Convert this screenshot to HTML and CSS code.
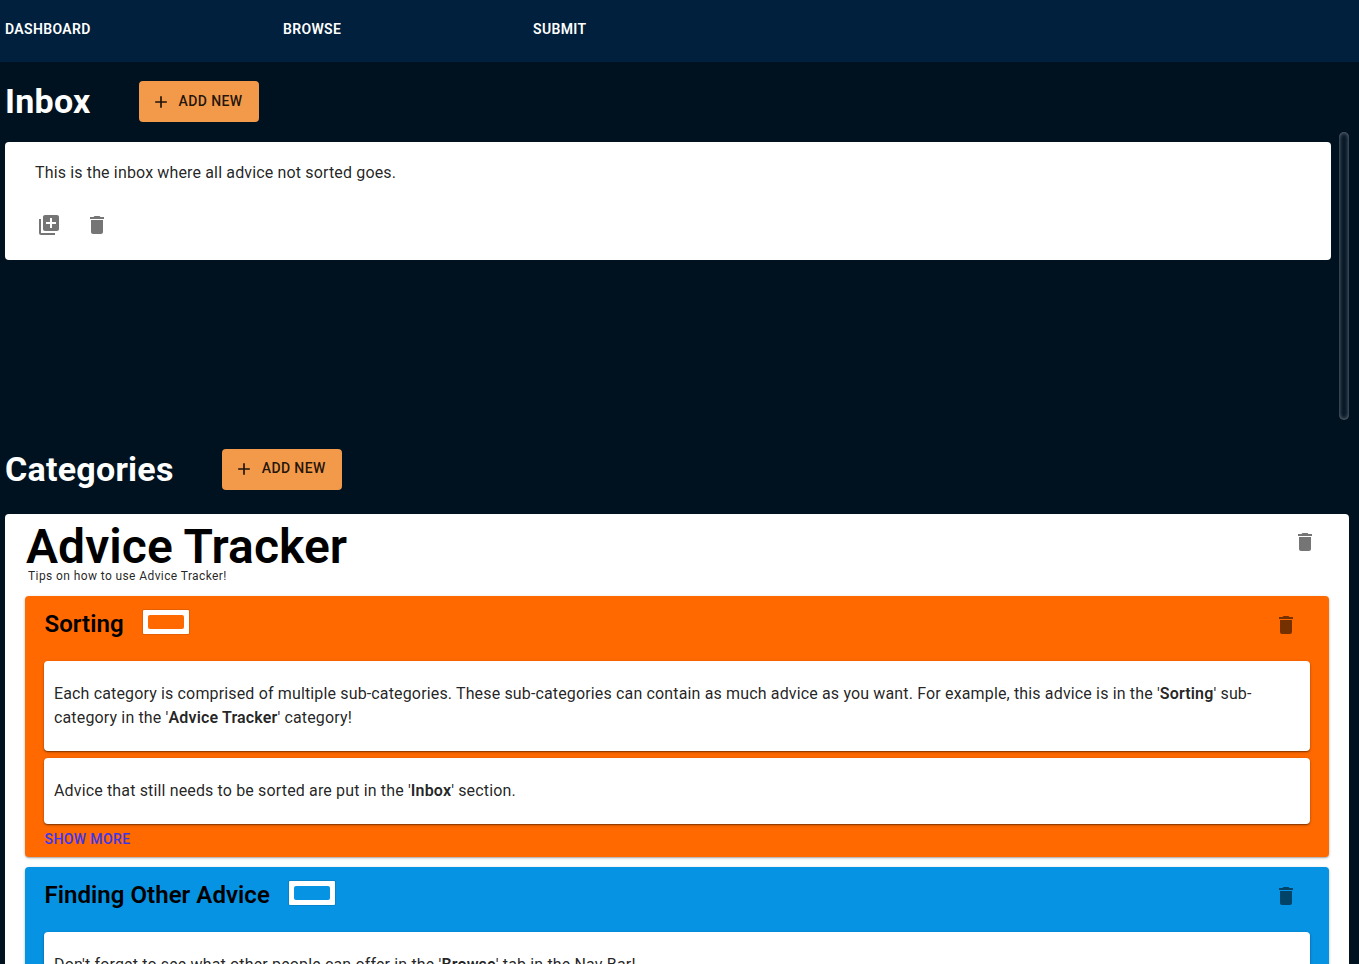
FILE: index.html
```html
<!DOCTYPE html>
<html lang="en">
<head>
<meta charset="utf-8">
<title>Advice Tracker</title>
<link rel="stylesheet" href="styles.css">
</head>
<body>
<svg class="defs" aria-hidden="true">
  <symbol id="trash" viewBox="0 0 24 24"><path d="M6 19c0 1.100.9 2 2 2h8c1.100 0 2-.9 2-2V7H6v12zM19 4h-3.500l-1-1h-5l-1 1H5v2h14V4z"/></symbol>
  <symbol id="plus" viewBox="0 0 24 24"><path d="M19 13h-6v6h-2v-6H5v-2h6V5h2v6h6v2z"/></symbol>
  <symbol id="library-add" viewBox="0 0 24 24"><path d="M4 6H2v14c0 1.100.9 2 2 2h14v-2H4V6zm16-4H8c-1.100 0-2 .9-2 2v12c0 1.100.9 2 2 2h12c1.100 0 2-.9 2-2V4c0-1.100-.9-2-2-2zm-1 9h-4v4h-2v-4H9V9h4V5h2v4h4v2z"/></symbol>
</svg>
<nav class="nav">
  <a>DASHBOARD</a><a>BROWSE</a><a>SUBMIT</a>
</nav>
<section class="inbox">
  <header class="section-head">
    <h1>Inbox</h1>
    <button class="add"><svg><use href="#plus"/></svg><span>ADD NEW</span></button>
  </header>
  <div class="inbox-scroll">
    <article class="inbox-card">
      <p>This is the inbox where all advice not sorted goes.</p>
      <div class="actions">
        <svg class="icon"><use href="#library-add"/></svg>
        <svg class="icon"><use href="#trash"/></svg>
      </div>
    </article>
    <div class="track"></div>
  </div>
</section>
<section class="categories">
  <header class="section-head">
    <h1>Categories</h1>
    <button class="add"><svg><use href="#plus"/></svg><span>ADD NEW</span></button>
  </header>
  <article class="category">
    <header class="category-head">
      <div>
        <h2>Advice Tracker</h2>
        <p class="caption">Tips on how to use Advice Tracker!</p>
      </div>
      <svg class="icon"><use href="#trash"/></svg>
    </header>
    <section class="sub orange">
      <header class="sub-head">
        <h3>Sorting</h3><span class="swatch"><i></i></span>
        <svg class="icon"><use href="#trash"/></svg>
      </header>
      <p class="advice">Each category is comprised of multiple sub-categories. These sub-categories can contain as much advice as you want. For example, this advice is in the '<b>Sorting</b>' sub-category in the '<b>Advice Tracker</b>' category!</p>
      <p class="advice">Advice that still needs to be sorted are put in the '<b>Inbox</b>' section.</p>
      <a class="more">SHOW MORE</a>
    </section>
    <section class="sub blue">
      <header class="sub-head">
        <h3>Finding Other Advice</h3><span class="swatch"><i></i></span>
        <svg class="icon"><use href="#trash"/></svg>
      </header>
      <p class="advice">Don't forget to see what other people can offer in the '<b>Browse</b>' tab in the Nav Bar!</p>
    </section>
  </article>
</section>
</body>
</html>
```
FILE: styles.css
```css
* { box-sizing: border-box; }
html, body { height: 100%; }
body {
  margin: 0;
  overflow: hidden;
  background: #001220;
  color: rgba(0, 0, 0, .87);
  font-family: Roboto, "Liberation Sans", sans-serif;
  font-size: 16px;
  line-height: 24px;
  letter-spacing: .148px;
}
h1, h2, h3, p { margin: 0; }
.defs { display: none; }
.icon { width: 24px; height: 24px; fill: rgba(0, 0, 0, .54); flex: none; display: block; }

.nav {
  display: grid;
  grid-template-columns: 278px 250px 1fr;
  height: 62px;
  padding: 17px 5px;
  background: #00203d;
  color: #fff;
  font-size: 14px;
  font-weight: 600;
  letter-spacing: .35px;
}

.section-head { display: flex; align-items: center; gap: 48px; padding-left: 5px; }
.section-head h1 { color: #fff; font-size: 34px; line-height: 40px; font-weight: 700; letter-spacing: .25px; padding-bottom: 2px; }
.inbox .section-head { height: 70px; padding-top: 9px; }
.add {
  display: flex;
  align-items: center;
  gap: 8px;
  width: 120px;
  height: 41px;
  padding: 0 0 0 12px;
  border: 0;
  border-radius: 4px;
  background: #f2994a;
  color: rgba(0, 0, 0, .87);
  font: 500 14px/24px Roboto, "Liberation Sans", sans-serif;
  letter-spacing: .4px;
}
.add svg { width: 20px; height: 20px; fill: currentColor; }
.add span { padding-bottom: 1px; }
.categories .add { padding-bottom: 2px; }

.inbox-scroll { display: flex; justify-content: space-between; height: 288px; padding: 0 10px 0 5px; }
.inbox-card {
  width: 1326px;
  height: 118px;
  margin-top: 10px;
  padding: 19px 30px 18px;
  border-radius: 4px;
  background: #fff;
}
.actions { display: flex; gap: 24px; margin-top: 28px; padding-left: 2px; }
.track {
  width: 10px;
  height: 288px;
  border-radius: 5px;
  background: #081827;
  box-shadow: inset 0 0 4px #7d8790;
}

.categories { padding-top: 29px; }
.categories .section-head { height: 41px; }
.category {
  width: 1344px;
  margin: 24px 0 0 5px;
  padding: 0 20px;
  border-radius: 4px;
  background: #fff;
}
.category-head { display: flex; justify-content: space-between; height: 82px; padding: 0 12px 0 1px; }
.category-head h2 { color: #000; font-size: 48px; line-height: 56px; font-weight: 600; letter-spacing: .06px; padding-top: 5px; }
.category-head .icon { margin-top: 16px; }
.caption { padding-left: 2px; font-size: 12px; line-height: 20px; letter-spacing: .4px; margin-top: -9px; color: rgba(0, 0, 0, .87); }

.sub {
  padding: 0 19px;
  border-radius: 4px;
  box-shadow: 0 1px 3px rgba(0, 0, 0, .25), 0 1px 1px rgba(0, 0, 0, .15);
}
.orange { height: 261px; margin-bottom: 10px; background: #ff6900; }
.blue { height: 261px; background: #0693e3; }
.sub-head { display: flex; height: 65px; padding: 12px 12px 0 .5px; }
.sub-head h3 { color: #000; font-size: 24px; line-height: 32px; font-weight: 600; letter-spacing: .05px; }
.sub-head .icon { margin: 5px 0 0 auto; }
.swatch {
  width: 46px;
  height: 24px;
  margin: 2px 0 0 19.500px;
  padding: 5px;
  border-radius: 1px;
  background: #fff;
  box-shadow: 0 0 0 1px rgba(0, 0, 0, .1);
}
.swatch i { display: block; width: 36px; height: 14px; border-radius: 2px; }
.orange .swatch i { background: #ff6900; }
.blue .swatch i { background: #0693e3; }
.advice {
  margin-bottom: 7px;
  padding: 21px 10px;
  border-radius: 4px;
  background: #fff;
  box-shadow: 0 1px 3px rgba(0, 0, 0, .3), 0 1px 1px rgba(0, 0, 0, .3);
}
.advice b { font-weight: 600; }
.more {
  display: block;
  margin-top: -4px;
  padding-left: .5px;
  color: #3a36f0;
  font-size: 14px;
  font-weight: 500;
  letter-spacing: .4px;
}
```
